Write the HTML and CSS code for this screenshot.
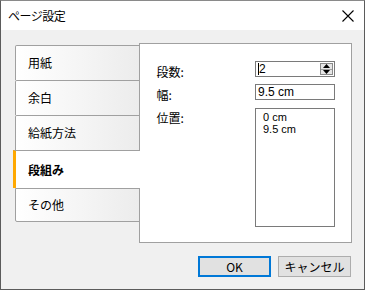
FILE: index.html
```html
<!DOCTYPE html>
<html lang="ja">
<head>
<meta charset="utf-8">
<link rel="stylesheet" href="styles.css">
</head>
<body>
<div class="window">
  <div class="titlebar">
    <span class="title">ページ設定</span>
    <svg class="close" width="12" height="12" viewBox="0 0 12 12"><path d="M0.5 0.5 L11.5 11.5 M11.5 0.5 L0.5 11.5" stroke="#000" stroke-width="1.1" fill="none"/></svg>
  </div>
  <div class="content">
    <div class="main">
      <div class="tabs">
        <div class="tab">用紙</div>
        <div class="tab">余白</div>
        <div class="tab">給紙方法</div>
        <div class="tab active">段組み</div>
        <div class="tab last">その他</div>
      </div>
      <div class="panel">
        <div class="row">
          <span class="label">段数:</span>
          <div class="field spin"><span class="caret">2</span>
            <div class="spinbtns">
              <div class="sb"><svg width="7" height="4" viewBox="0 0 7 4"><path d="M3.5 0 L7 4 L0 4 Z" fill="#000"/></svg></div>
              <div class="sb"><svg width="7" height="4" viewBox="0 0 7 4"><path d="M0 0 L7 0 L3.5 4 Z" fill="#000"/></svg></div>
            </div>
          </div>
        </div>
        <div class="row">
          <span class="label">幅:</span>
          <div class="field">9.5 cm</div>
        </div>
        <div class="row top">
          <span class="label">位置:</span>
          <div class="list">
            <div class="item">0 cm</div>
            <div class="item">9.5 cm</div>
          </div>
        </div>
      </div>
    </div>
    <div class="buttons">
      <button class="btn default">OK</button>
      <button class="btn">キャンセル</button>
    </div>
  </div>
</div>
</body>
</html>
```
FILE: styles.css
```css
* { box-sizing: border-box; }
html, body { margin: 0; padding: 0; }
body {
  width: 365px;
  height: 290px;
  font-family: "Noto Sans CJK JP", "Liberation Sans", sans-serif;
  font-size: 12px;
  color: #000;
  background: #f0f0f0;
}
.window {
  width: 365px;
  height: 290px;
  border: 1px solid #5b5b5b;
  border-top-color: #8a8a8a;
  display: flex;
  flex-direction: column;
  background: #f0f0f0;
}
.titlebar {
  height: 29px;
  background: #fff;
  display: flex;
  align-items: center;
  justify-content: space-between;
  padding: 0 10px 0 7px;
  flex-shrink: 0;
}
.title {
  font-size: 12px;
  letter-spacing: -0.5px;
  line-height: 1;
  margin-top: 1px;
}
.close { display: block; margin-top: 1px; }
.content {
  flex: 1;
  display: flex;
  flex-direction: column;
  padding: 13px 12px 0 14px;
}
.main {
  display: flex;
  align-items: flex-start;
}
.tabs {
  width: 125px;
  margin-top: 2px;
  display: flex;
  flex-direction: column;
  position: relative;
  z-index: 1;
  margin-right: -1px;
}
.tab {
  height: 35px;
  border: 1px solid #a0a0a0;
  border-bottom: none;
  border-radius: 2px 0 0 0;
  background: linear-gradient(to right, #ffffff, #ececec);
  display: flex;
  align-items: center;
  padding-left: 12px;
  line-height: 1;
}
.tab.last {
  border-bottom: 1px solid #a0a0a0;
  height: 34px;
  border-radius: 0 0 0 2px;
}
.tab.active {
  background: #fff;
  border-right: none;
  border-left: 3px solid #ffa800;
  margin-left: -2px;
  padding-left: 12px;
  height: 38px;
  font-weight: bold;
  border-radius: 0;
}
.tab.active + .tab { border-top: 1px solid #a0a0a0; }
.panel {
  width: 214px;
  height: 200px;
  background: #fff;
  border: 1px solid #a0a0a0;
  padding: 17px 16px 0 17px;
  display: flex;
  flex-direction: column;
  gap: 5px;
}
.row {
  display: flex;
  align-items: flex-start;
  justify-content: space-between;
}
.row.top { margin-top: 1px; }
.label { line-height: 14px; padding-top: 4px; }
.row.top .label { padding-top: 3px; }
.field {
  width: 80px;
  height: 16px;
  border: 1px solid #7a7a7a;
  background: #fff;
  padding-left: 2px;
  font-size: 12px;
  line-height: 14px;
  display: flex;
  align-items: center;
  font-family: "Liberation Sans", sans-serif;
}
.spin { justify-content: space-between; padding-right: 1px; }
.caret { border-left: 1px solid #000; line-height: 12px; }
.spinbtns {
  width: 13px;
  height: 12px;
  border: 1px solid #8a8a8a;
  display: flex;
  flex-direction: column;
  background: #e6e6e6;
}
.sb {
  flex: 1;
  display: flex;
  align-items: center;
  justify-content: center;
}
.sb + .sb { border-top: 1px solid #a0a0a0; }
.list {
  width: 80px;
  height: 119px;
  border: 1px solid #7a7a7a;
  padding: 2px 0 0 7px;
  font-family: "Liberation Sans", sans-serif;
  font-size: 11px;
}
.item { height: 12px; line-height: 12px; }
.buttons {
  display: flex;
  justify-content: flex-end;
  gap: 7px;
  margin-top: 13px;
  padding-right: 1px;
}
.btn {
  width: 73px;
  height: 21px;
  border: 1px solid #adadad;
  background: #e1e1e1;
  font-family: "Noto Sans CJK JP", "Liberation Sans", sans-serif;
  font-size: 12px;
  padding: 0;
  line-height: 1;
  color: #000;
}
.btn.default { border: 2px solid #0078d7; }
```
